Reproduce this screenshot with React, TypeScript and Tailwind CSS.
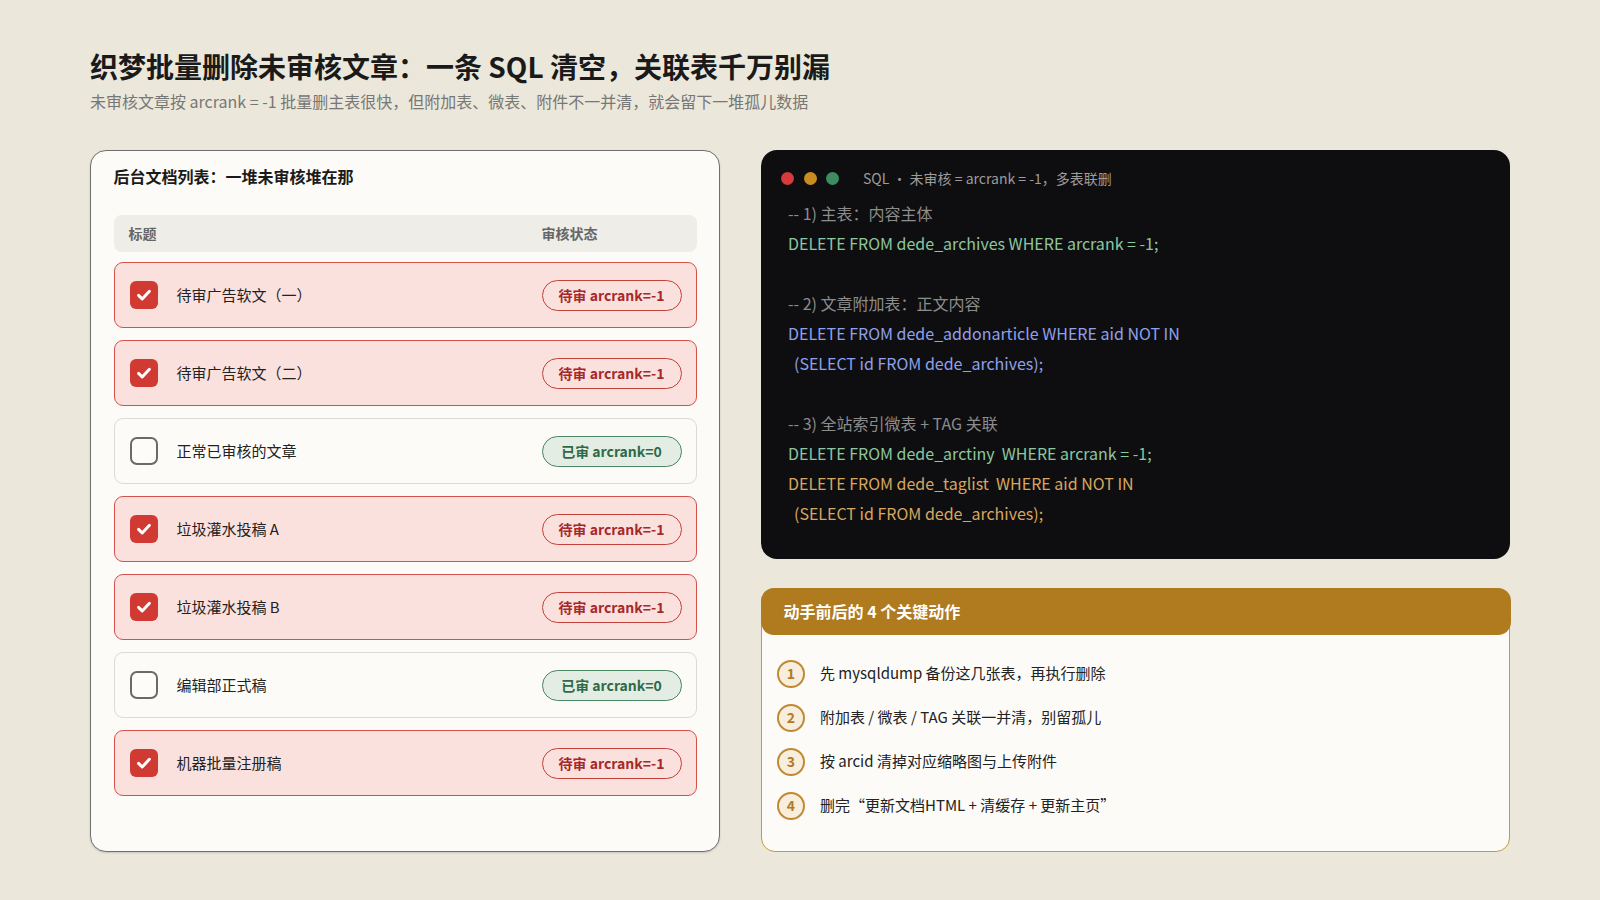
const FONT = '"Noto Sans CJK SC", "Noto Sans", "Liberation Sans", sans-serif'

type Doc = { title: string; pending: boolean }

const docs: Doc[] = [
  { title: '待审广告软文（一）', pending: true },
  { title: '待审广告软文（二）', pending: true },
  { title: '正常已审核的文章', pending: false },
  { title: '垃圾灌水投稿 A', pending: true },
  { title: '垃圾灌水投稿 B', pending: true },
  { title: '编辑部正式稿', pending: false },
  { title: '机器批量注册稿', pending: true },
]

type Line = { text: string; tone: 'comment' | 'green' | 'blue' | 'orange' | 'blank'; indent?: boolean }

const sql: Line[] = [
  { text: '-- 1) 主表：内容主体', tone: 'comment' },
  { text: 'DELETE FROM dede_archives WHERE arcrank = -1;', tone: 'green' },
  { text: '', tone: 'blank' },
  { text: '-- 2) 文章附加表：正文内容', tone: 'comment' },
  { text: 'DELETE FROM dede_addonarticle WHERE aid NOT IN', tone: 'blue' },
  { text: '(SELECT id FROM dede_archives);', tone: 'blue', indent: true },
  { text: '', tone: 'blank' },
  { text: '-- 3) 全站索引微表 + TAG 关联', tone: 'comment' },
  { text: 'DELETE FROM dede_arctiny  WHERE arcrank = -1;', tone: 'green' },
  { text: 'DELETE FROM dede_taglist  WHERE aid NOT IN', tone: 'orange' },
  { text: '(SELECT id FROM dede_archives);', tone: 'orange', indent: true },
]

const toneClass = {
  comment: 'text-[#8c8c8c]',
  green: 'text-[#8cc79e]',
  blue: 'text-[#8fa1ec]',
  orange: 'text-[#d8a75f]',
  blank: '',
}

const steps = [
  '先 mysqldump 备份这几张表，再执行删除',
  '附加表 / 微表 / TAG 关联一并清，别留孤儿',
  '按 arcid 清掉对应缩略图与上传附件',
  '删完“更新文档HTML + 清缓存 + 更新主页”',
]

function Checkbox({ checked }: { checked: boolean }) {
  if (!checked) {
    return <div className="size-[28px] shrink-0 rounded-[7px] border-2 border-[#6a6a6a] bg-[#fdfcf9]" />
  }
  return (
    <div className="flex size-[28px] shrink-0 items-center justify-center rounded-[6px] bg-[#d03a33]">
      <svg viewBox="0 0 24 24" className="size-[20px]" fill="none" stroke="#fff" strokeWidth={3.6} strokeLinecap="round" strokeLinejoin="round">
        <path d="M5.5 12.5l4.3 4.3L18.5 7.5" />
      </svg>
    </div>
  )
}

function DocRow({ doc }: { doc: Doc }) {
  return (
    <li
      className={`flex h-[66px] items-center rounded-[9px] pl-[15px] pr-[14px] ${
        doc.pending ? 'border-[1.5px] border-[#d2524b] bg-[#fae1de]' : 'border border-[#dcdad4] bg-[#fcfbf8]'
      }`}
    >
      <Checkbox checked={doc.pending} />
      <span className="ml-[19px] text-[15px] text-[#222]">{doc.title}</span>
      <span
        className={`ml-auto flex h-[31px] w-[140px] items-center justify-center rounded-full border-[1.5px] text-[14px] font-bold ${
          doc.pending ? 'border-[#c2413a] text-[#a8282a]' : 'border-[#4a8564] bg-[#e3ede4] text-[#2f6a48]'
        }`}
      >
        {doc.pending ? '待审 arcrank=-1' : '已审 arcrank=0'}
      </span>
    </li>
  )
}

export default function App() {
  return (
    <div className="min-h-[900px] bg-[#ebe7da] px-[90px] pt-[47px]" style={{ fontFamily: FONT }}>
      <h1 className="text-[28px] font-bold leading-[38px] text-[#1a1a1a]">织梦批量删除未审核文章：一条 SQL 清空，关联表千万别漏</h1>
      <p className="mt-[4px] text-[16px] leading-[24px] text-[#777]">
        未审核文章按 arcrank = -1 批量删主表很快，但附加表、微表、附件不一并清，就会留下一堆孤儿数据
      </p>

      <div className="mt-[37px] grid h-[702px] grid-cols-[630px_1fr] gap-[41px]">
        {/* left: doc list */}
        <section className="rounded-[16px] border-[1.5px] border-[#6f6f6f] bg-[#fcfbf8] px-[22.5px] pt-[13px] shadow-[0_1px_2px_rgba(0,0,0,0.15)]">
          <h2 className="text-[16px] font-bold leading-[24px] text-[#1a1a1a]">后台文档列表：一堆未审核堆在那</h2>
          <div className="mt-[27px] flex h-[37px] items-center rounded-[8px] bg-[#efede7] px-[15px] text-[14px] font-semibold text-[#666]">
            <span>标题</span>
            <span className="ml-auto w-[140px] pr-[1px]">审核状态</span>
          </div>
          <ul className="mt-[10px] flex flex-col gap-[12px]">
            {docs.map((d) => (
              <DocRow key={d.title} doc={d} />
            ))}
          </ul>
        </section>

        {/* right column */}
        <div className="flex flex-col gap-[29px]">
          <section className="h-[409px] rounded-[16px] bg-[#0e0e10] pl-[27px] pt-[16px]">
            <div className="flex h-[24px] items-center">
              <div className="-ml-[7px] flex gap-[9.5px]">
                <span className="size-[13px] rounded-full bg-[#d63a3a]" />
                <span className="size-[13px] rounded-full bg-[#c98c22]" />
                <span className="size-[13px] rounded-full bg-[#3f8a60]" />
              </div>
              <span className="ml-[24px] text-[14px] text-[#9c9c9c]">SQL · 未审核 = arcrank = -1，多表联删</span>
            </div>
            <div className="mt-[8px]">
              {sql.map((l, i) => (
                <div
                  key={i}
                  className={`h-[30px] whitespace-pre text-[16px] leading-[30px] ${toneClass[l.tone]} ${l.indent ? 'pl-[6px]' : ''}`}
                >
                  {l.text}
                </div>
              ))}
            </div>
          </section>

          <section className="flex-1 rounded-[14px] border-[1.5px] border-[#c9973d] bg-[#fcfbf8]">
            <div className="-mx-[1.5px] -mt-[1.5px] flex h-[47px] items-center rounded-[13px] bg-[#b07a1f] px-[23px] text-[16px] font-bold text-white">
              动手前后的 4 个关键动作
            </div>
            <ol className="mt-[17px] flex flex-col">
              {steps.map((s, i) => (
                <li key={s} className="flex h-[44px] items-center pl-[15px]">
                  <span className="flex size-[28px] shrink-0 items-center justify-center rounded-full border-2 border-[#c08a35] bg-[#f7eedd] text-[14px] font-semibold text-[#b27a26]">
                    {i + 1}
                  </span>
                  <span className="ml-[15px] text-[15px] text-[#222]">{s}</span>
                </li>
              ))}
            </ol>
          </section>
        </div>
      </div>
    </div>
  )
}
